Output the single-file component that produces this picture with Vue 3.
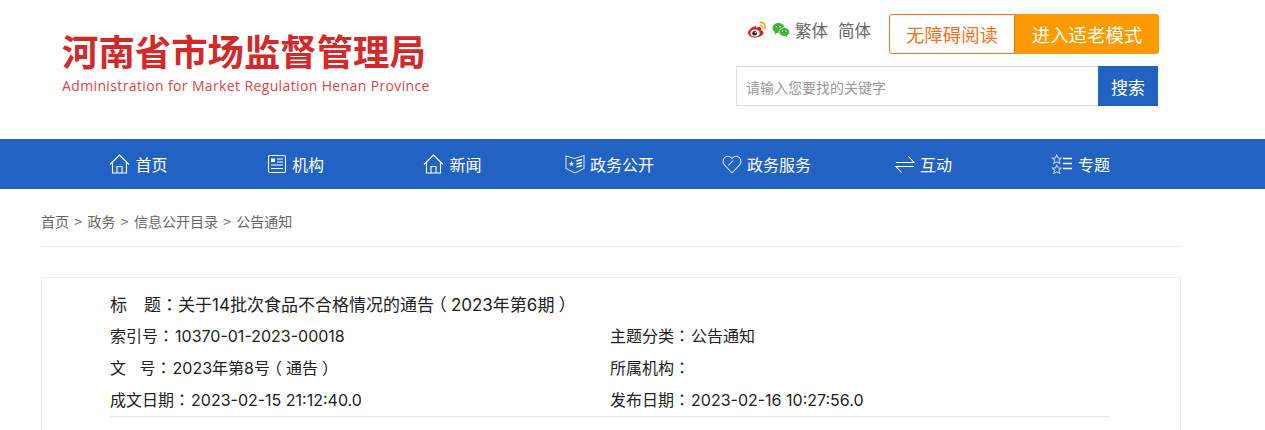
<template>
  <div class="page">
    <header class="head">
      <div class="logo">
        <h1 class="logo-title">河南省市场监督管理局</h1>
        <p class="logo-sub">Administration for Market Regulation Henan Province</p>
      </div>
      <div class="tools">
        <div class="tools-top">
          <div class="links">
            <svg class="social" width="20" height="18" viewBox="0 0 20 18">
              <path d="M8 5.200C4.600 6.200 1 9.200 1 12c0 2.600 3.400 4.500 7.400 4.500 4.300 0 8-2.200 8-4.700 0-1.600-1.400-2.300-2.500-2.600.6-1.500.3-2.600-.7-3-1.200-.4-3 .3-4 1 .2-1.500-.2-2.600-1.200-2z" fill="#d81e1e"/>
              <ellipse cx="8" cy="12" rx="4.600" ry="3.500" fill="#fff"/>
              <ellipse cx="7.600" cy="12.200" rx="2.400" ry="2.200" fill="#222"/>
              <circle cx="8.300" cy="11.500" r=".7" fill="#fff"/>
              <path d="M13 1.300c3.200-.2 5.700 2.300 5 6" fill="none" stroke="#f39a1e" stroke-width="1.600" stroke-linecap="round"/>
              <path d="M13.200 4.200c1.500-.1 2.500 1 2.200 2.700" fill="none" stroke="#f39a1e" stroke-width="1.300" stroke-linecap="round"/>
            </svg>
            <svg class="social" width="18" height="16" viewBox="0 0 18 16">
              <ellipse cx="6.500" cy="6" rx="6" ry="5" fill="#3fb23a"/>
              <path d="M3 9.500 2.600 12.400 5.800 10.500z" fill="#3fb23a"/>
              <ellipse cx="12.300" cy="10" rx="5.300" ry="4.400" fill="#3fb23a" stroke="#fff" stroke-width=".7"/>
              <path d="M14.500 13 15.300 15.200 12.600 14z" fill="#3fb23a"/>
              <circle cx="4.500" cy="4.700" r=".8" fill="#fff"/>
              <circle cx="8.300" cy="4.700" r=".8" fill="#fff"/>
              <circle cx="10.500" cy="9" r=".7" fill="#fff"/>
              <circle cx="14" cy="9" r=".7" fill="#fff"/>
            </svg>
            <a class="lang">繁体</a>
            <a class="lang">简体</a>
          </div>
          <div class="btns">
            <a class="btn-a">无障碍阅读</a>
            <a class="btn-b">进入适老模式</a>
          </div>
        </div>
        <div class="search">
          <div class="search-input">请输入您要找的关键字</div>
          <button class="search-btn">搜索</button>
        </div>
      </div>
    </header>

    <nav class="nav">
      <div class="nav-inner">
        <a v-for="item in navItems" :key="item.label" class="nav-item">
          <svg class="nav-icon" :width="item.w" height="20" :viewBox="`0 0 ${item.w} 20`" fill="none" stroke="#fff" stroke-width="1.100">
            <template v-if="item.icon === 'home'">
              <path d="M1 10.500 10.500 1 20 10.500"/>
              <path d="M3.500 8.500V19H17.500V8.500"/>
              <path d="M8 19V12.500H13V19"/>
            </template>
            <template v-else-if="item.icon === 'news'">
              <rect x="1.500" y="1.500" width="17" height="17" rx="1.500"/>
              <rect x="4" y="4.500" width="4" height="3.500" fill="#fff" stroke="none"/>
              <path d="M10 5H16M10 8H16M4 11H16M4 14.500H16"/>
            </template>
            <template v-else-if="item.icon === 'book'">
              <path d="M1 2 9.500 4.500 19 1.500V14.500L10 19 1 14.500Z" stroke="#cfdcf2"/>
              <path d="M6.500 7 7.300 8.900H9.200L7.700 10.100 8.200 12 6.500 11 4.800 12 5.300 10.100 3.800 8.900H5.700Z" fill="#fff" stroke="none"/>
              <path d="M11.500 7 17 5.500M11.500 10 17 8.500M11.500 13 17 11.500" stroke-width="1.300"/>
            </template>
            <template v-else-if="item.icon === 'heart'">
              <path d="M10 19 2.400 10.800C-.2 7.800 1.500 2.200 6 2.200c1.700 0 3 .8 4 2.300 1-1.500 2.300-2.300 4-2.300 4.500 0 6.200 5.600 3.600 8.600L10 19" stroke="#d9e4f5"/>
              <path d="M6.500 11.500 11 6.500" stroke="#d9e4f5"/>
            </template>
            <template v-else-if="item.icon === 'swap'">
              <path d="M1 8.500H19L13.500 2.500"/>
              <path d="M19 12.500H1L6.500 18.500"/>
            </template>
            <template v-else>
              <path d="M5.800 1 7.200 4H10.300L8 6.200 8.800 9.400 5.800 7.800 2.800 9.400 3.600 6.200 1.300 4H4.400Z" stroke="#b9cdec"/>
              <path d="M5.800 11 7.200 14H10.300L8 16.200 8.800 19.400 5.800 17.800 2.800 19.400 3.600 16.200 1.300 14H4.400Z" stroke="#b9cdec"/>
              <path d="M12 4.500H21M12 9.500H21M12 14.500H21" stroke-width="1.300"/>
            </template>
          </svg>
          <span>{{ item.label }}</span>
        </a>
      </div>
    </nav>

    <main class="main">
      <div class="crumbs">首页 &gt; 政务 &gt; 信息公开目录 &gt; 公告通知</div>
      <section class="info">
        <div class="info-title">
          <span v-for="(part, i) in splitPunc(title)" :key="i" :class="part.cls">{{ part.text }}</span>
        </div>
        <div class="info-grid">
          <div v-for="row in rows" :key="row" class="info-cell">
            <span v-for="(part, i) in splitPunc(row)" :key="i" :class="part.cls">{{ part.text }}</span>
          </div>
        </div>
      </section>
    </main>
  </div>
</template>

<script setup>
const navItems = [
  { label: '首页', icon: 'home', w: 21 },
  { label: '机构', icon: 'news', w: 20 },
  { label: '新闻', icon: 'home', w: 21 },
  { label: '政务公开', icon: 'book', w: 20 },
  { label: '政务服务', icon: 'heart', w: 20 },
  { label: '互动', icon: 'swap', w: 20 },
  { label: '专题', icon: 'topic', w: 22 }
]

const title = '标　题：关于14批次食品不合格情况的通告（2023年第6期）'

const rows = [
  '索引号：10370-01-2023-00018',
  '主题分类：公告通知',
  '文\u00a0\u00a0\u00a0号：2023年第8号（通告）',
  '所属机构：',
  '成文日期：2023-02-15 21:12:40.0',
  '发布日期：2023-02-16 10:27:56.0'
]

const puncClass = { '：': 'punc colon', '（': 'punc open', '）': 'punc close' }

// the colons and brackets sit in the middle of their square in the original
function splitPunc(text) {
  return text.split(/([：（）])/).filter(Boolean).map(t => ({ text: t, cls: puncClass[t] || '' }))
}
</script>

<style>
html, body {
  overflow: hidden;
  background: #fff;
}
</style>

<style scoped>
.page {
  width: 1265px;
  height: 430px;
  overflow: hidden;
  font-family: "Noto Sans CJK SC", "Liberation Sans", sans-serif;
  color: #333;
}

.head {
  height: 139px;
  display: flex;
  justify-content: space-between;
  padding: 0 106px 0 62px;
  box-sizing: border-box;
}

.logo {
  padding-top: 27px;
}

.logo-title {
  margin: 0;
  font-size: 36.400px;
  line-height: 46px;
  font-weight: 700;
  color: #d22a2a;
  white-space: nowrap;
}

.logo-sub {
  margin: 3px 0 0;
  font-family: "Open Sans", "Liberation Sans", sans-serif;
  font-size: 14px;
  line-height: 20px;
  letter-spacing: .37px;
  color: #dc4447;
  white-space: nowrap;
}

.tools {
  padding-top: 14px;
  width: 422px;
}

.tools-top {
  display: flex;
  justify-content: flex-end;
  align-items: flex-start;
}

.links {
  display: flex;
  align-items: center;
  height: 32px;
  margin-right: 13px;
}

.social {
  margin-right: 5px;
}

.lang {
  font-size: 16.500px;
  color: #666;
  margin-left: 0;
  margin-right: 10px;
}

.lang:last-child {
  margin-right: 5px;
}

.btns {
  display: flex;
  height: 40px;
}

.btn-a,
.btn-b {
  display: flex;
  align-items: center;
  justify-content: center;
  font-size: 18.400px;
  box-sizing: border-box;
}

.btn-a {
  width: 126px;
  color: #f5711d;
  border: 1px solid #f5711d;
  border-radius: 3px 0 0 3px;
}

.btn-b {
  width: 144px;
  color: #fff;
  background: #fb9a02;
  border-radius: 0 3px 3px 0;
}

.search {
  display: flex;
  height: 40px;
  margin: 12px 0 0 -1px;
}

.search-input {
  width: 362px;
  box-sizing: border-box;
  border: 1px solid #ddd;
  border-right: 0;
  padding-left: 9px;
  font-size: 14px;
  line-height: 40px;
  color: #999;
}

.search-btn {
  width: 60px;
  border: 0;
  padding: 0;
  background: #2262c3;
  color: #fff;
  font-family: inherit;
  font-size: 17px;
}

.nav {
  height: 50px;
  background: #2262c3;
  padding-left: 60px;
}

.nav-inner {
  display: grid;
  grid-template-columns: repeat(7, 157px);
  height: 100%;
}

.nav-item {
  display: flex;
  align-items: center;
  justify-content: center;
  gap: 5px;
  color: #fff;
  font-size: 16px;
  white-space: nowrap;
}

.main {
  width: 1140px;
  margin-left: 41px;
}

.crumbs {
  height: 57px;
  line-height: 65px;
  font-size: 14px;
  color: #666;
  border-bottom: 1px solid #e8e8e8;
  word-spacing: 2.200px;
}

.info {
  margin-top: 30px;
  border: 1px solid #eee;
  padding: 10px 70px 0 68px;
  min-height: 160px;
  font-family: Inter, "Noto Sans CJK SC", sans-serif;
}

.info-title {
  font-size: 17px;
  height: 31px;
  line-height: 31px;
  color: #222;
}

.punc {
  font-family: "Noto Sans CJK TC", sans-serif;
}

.open,
.close {
  display: inline-block;
}

.open {
  transform: translateX(-.25em);
}

.close {
  transform: translateX(.25em);
}

.info-grid {
  display: grid;
  grid-template-columns: 500px 500px;
  grid-auto-rows: 32px;
  width: 1000px;
  padding-bottom: 1px;
  border-bottom: 1px solid #e8e8e8;
}

.info-cell {
  font-size: 16px;
  height: 32px;
  line-height: 32px;
  color: #222;
}

.info-cell .colon {
  padding-right: 1px;
}
</style>
